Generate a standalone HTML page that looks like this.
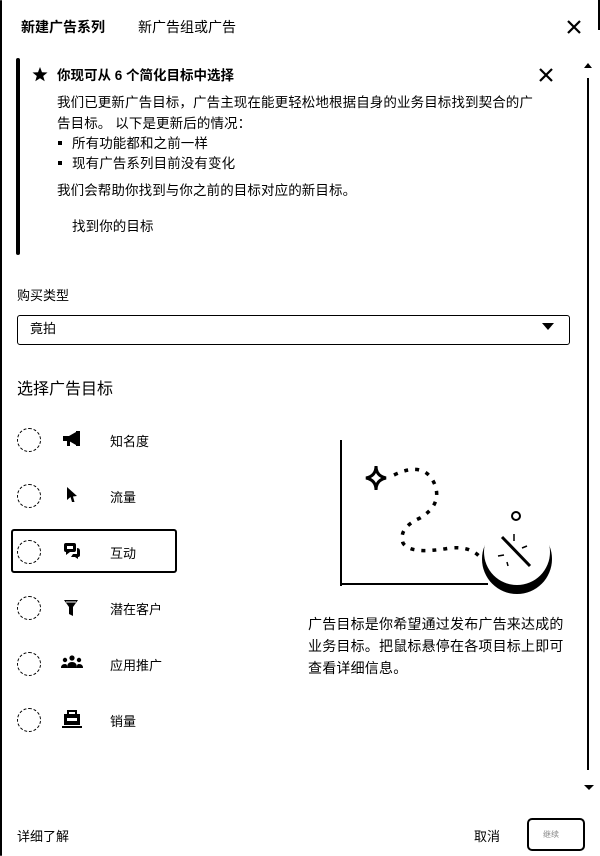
<!DOCTYPE html>
<html><head><meta charset="utf-8"><style>
*{margin:0;padding:0;box-sizing:border-box}
body{width:600px;height:856px;background:#fff;position:relative;overflow:hidden;font-family:"Liberation Sans","Noto Sans CJK SC",sans-serif;color:#000;font-size:13px}
.a{position:absolute}
.t{position:absolute;white-space:nowrap}
.b{font-size:13.5px;letter-spacing:0.1px}
.rad{position:absolute;left:17px;width:24px;height:24px;border:1px dashed #000;border-radius:50%}
</style></head><body>
<div class="a" style="left:0;top:0;width:2px;height:856px;background:#000;border-radius:2px"></div>
<div class="a" style="left:598px;top:0;width:2px;height:30px;background:#000"></div>
<div class="t" style="left:21px;top:17px;font-size:14px;font-weight:bold">新建广告系列</div>
<div class="t" style="left:138px;top:17px;font-size:14px">新广告组或广告</div>
<svg class="a" style="left:566px;top:19px" width="16" height="16"><path d="M2 2L14 14M14 2L2 14" stroke="#000" stroke-width="2.2"/></svg>

<div class="a" style="left:16px;top:58px;width:4px;height:197px;background:#000;border-radius:3px"></div>
<svg class="a" style="left:32px;top:66px" width="16" height="16"><path d="M8 1L10 6.2L15.5 6.5L11.2 10L12.7 15.2L8 12.3L3.3 15.2L4.8 10L0.5 6.5L6 6.2Z" fill="#000"/></svg>
<div class="t" style="left:57px;top:64px;font-size:13.5px;font-weight:bold">你现可从 6 个简化目标中选择</div>
<svg class="a" style="left:539px;top:68px" width="14" height="14"><path d="M1 1L13 13M13 1L1 13" stroke="#000" stroke-width="2.2"/></svg>
<div class="t b" style="left:57px;top:91px">我们已更新广告目标，广告主现在能更轻松地根据自身的业务目标找到契合的广</div>
<div class="t b" style="left:57px;top:112px">告目标。 以下是更新后的情况：</div>
<div class="a" style="left:58px;top:141px;width:4px;height:4px;background:#000"></div>
<div class="t b" style="left:72px;top:132px">所有功能都和之前一样</div>
<div class="a" style="left:58px;top:161px;width:4px;height:4px;background:#000"></div>
<div class="t b" style="left:72px;top:152px">现有广告系列目前没有变化</div>
<div class="t b" style="left:57px;top:179px">我们会帮助你找到与你之前的目标对应的新目标。</div>
<div class="t b" style="left:72px;top:215px">找到你的目标</div>

<svg class="a" style="left:581px;top:60px" width="14" height="10"><path d="M3 8L7 3L11 8Z" fill="#000"/></svg>
<div class="a" style="left:587px;top:78px;width:2px;height:692px;background:#000"></div>
<svg class="a" style="left:582px;top:783px" width="14" height="10"><path d="M2 2L12 2L7 7Z" fill="#000"/></svg>

<div class="t" style="left:17px;top:285px">购买类型</div>
<div class="a" style="left:17px;top:315px;width:553px;height:30px;border:1px solid #000;border-radius:3px"></div>
<div class="t" style="left:30px;top:318px">竟拍</div>
<svg class="a" style="left:541px;top:322px" width="14" height="10"><path d="M1 1L13 1L7 8Z" fill="#000"/></svg>

<div class="t" style="left:17px;top:375px;font-size:16px">选择广告目标</div>

<div class="rad" style="top:428px"></div>
<div class="rad" style="top:484px"></div>
<div class="rad" style="top:540px"></div>
<div class="rad" style="top:596px"></div>
<div class="rad" style="top:652px"></div>
<div class="rad" style="top:708px"></div>
<div class="a" style="left:11px;top:529px;width:166px;height:44px;border:2.5px solid #000;border-radius:3px"></div>

<svg class="a" style="left:62px;top:431px" width="20" height="16"><path d="M1 5H7L14 1V14L7 10H1Z M5 10H8V15H5Z" fill="#000"/><rect x="14" y="0" width="4" height="15" fill="#000"/></svg>
<svg class="a" style="left:66px;top:486px" width="12" height="18"><path d="M1 1L11 10L7 10.5L8.5 16L6 16L4.5 11L1 14Z" fill="#000"/></svg>
<svg class="a" style="left:62px;top:542px" width="20" height="20"><path d="M2 3Q2 1 4 1H12Q14 1 14 3V8Q14 10 12 10H8L4 13V10Q2 10 2 8Z" fill="#000"/><rect x="5" y="4" width="6" height="3" fill="#fff"/><path d="M15 6Q18 6 18 9V13Q18 15 16 15V17L13 15H9L11 12H15Z" fill="#000"/></svg>
<svg class="a" style="left:63px;top:599px" width="16" height="18"><path d="M1 1H15L10 8V17L6 15V8Z" fill="#000"/><path d="M3 3H13" stroke="#fff"/></svg>
<svg class="a" style="left:61px;top:655px" width="22" height="14"><circle cx="11" cy="3" r="2.6" fill="#000"/><circle cx="4" cy="5" r="2.2" fill="#000"/><circle cx="18" cy="5" r="2.2" fill="#000"/><path d="M6 13Q6 7 11 7Q16 7 16 13Z M0 13Q0 9 4 9Q6 9 6 11V13Z M22 13Q22 9 18 9Q16 9 16 11V13Z" fill="#000"/></svg>
<svg class="a" style="left:62px;top:709px" width="20" height="20"><path d="M6 5V2H14V5" stroke="#000" stroke-width="2" fill="none"/><rect x="2" y="5" width="16" height="11" fill="#000"/><rect x="5" y="9" width="10" height="3" fill="#fff"/><rect x="0" y="17" width="20" height="2" fill="#000"/></svg>

<div class="t" style="left:110px;top:431px">知名度</div>
<div class="t" style="left:110px;top:487px">流量</div>
<div class="t" style="left:110px;top:543px">互动</div>
<div class="t" style="left:110px;top:599px">潜在客户</div>
<div class="t" style="left:110px;top:655px">应用推广</div>
<div class="t" style="left:110px;top:711px">销量</div>

<svg class="a" style="left:330px;top:440px" width="225" height="160">
<path d="M11 0V146" stroke="#000" stroke-width="2"/>
<path d="M10 144H158" stroke="#000" stroke-width="2"/>
<path d="M46 26Q46 36 36 38Q46 40 46 50Q46 40 56 38Q46 36 46 26Z" fill="none" stroke="#000" stroke-width="3"/>
<path d="M64 35Q95 20 105 45Q112 65 90 78Q68 88 73 103Q80 115 120 108Q140 106 150 117" fill="none" stroke="#000" stroke-width="3.5" stroke-dasharray="4 7"/>
<circle cx="187" cy="119" r="35" fill="#000"/>
<circle cx="187" cy="112" r="33" fill="#fff"/>
<circle cx="186" cy="76" r="4" fill="none" stroke="#000" stroke-width="2"/>
<path d="M172 97L200 126" stroke="#000" stroke-width="3"/>
<path d="M184 94V101M197 106L192 108M168 116L174 115M178 126L177 122" stroke="#000" stroke-width="1.5"/>
</svg>
<div class="t" style="left:308px;top:613px;line-height:22px;font-size:14px;letter-spacing:0.2px">广告目标是你希望通过发布广告来达成的<br>业务目标。把鼠标悬停在各项目标上即可<br>查看详细信息。</div>

<div class="t" style="left:17px;top:826px">详细了解</div>
<div class="t" style="left:474px;top:826px">取消</div>
<div class="a" style="left:527px;top:818px;width:58px;height:33px;border:2px solid #000;border-radius:5px"></div>
<div class="t" style="left:543px;top:829px;font-size:8px;color:#888">继续</div>
</body></html>
